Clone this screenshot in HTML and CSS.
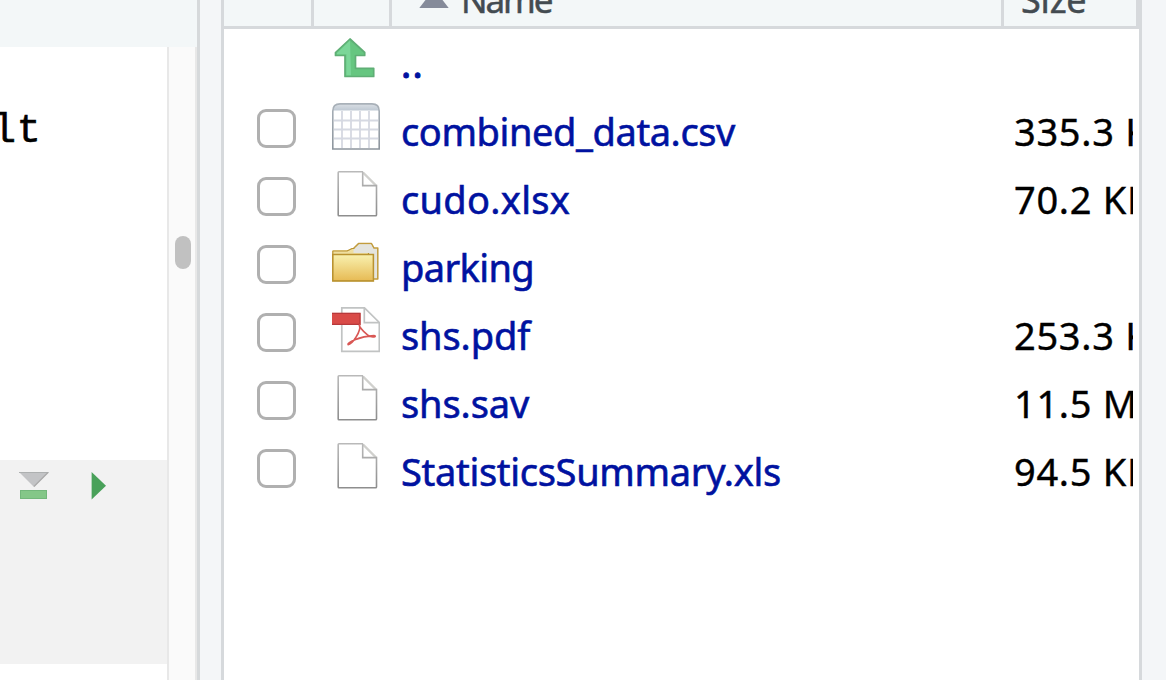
FILE: index.html
```
<!DOCTYPE html>
<html lang="en">
<head>
<meta charset="utf-8">
<title>Files</title>
<link rel="stylesheet" href="styles.css">
</head>
<body>
<svg class="defs" width="0" height="0" aria-hidden="true">
  <defs>
    <linearGradient id="paper" x1="0" y1="0" x2="0" y2="1"><stop offset="0" stop-color="#b9b9b9"/><stop offset="1" stop-color="#8e8e8e"/></linearGradient>
    <linearGradient id="folder" x1="0" y1="0" x2="0" y2="1"><stop offset="0" stop-color="#f8f0ae"/><stop offset="1" stop-color="#e7bb55"/></linearGradient>
    <linearGradient id="cap" x1="0" y1="0" x2="0" y2="1"><stop offset="0" stop-color="#d9dee4"/><stop offset="1" stop-color="#bfc9d3"/></linearGradient>
    <linearGradient id="frame" x1="0" y1="0" x2="0" y2="1"><stop offset="0" stop-color="#a9b1b9"/><stop offset="1" stop-color="#8d959d"/></linearGradient>
    <symbol id="file" viewBox="0 0 48 48"><path d="M6 1H30.5L44.5 15V44.5H6Z" fill="#fff"/><path d="M31 1.5L44 14.5" stroke="#d0d0cd" stroke-width="2.4"/><path d="M31 .8H7Q6.2 .8 6.2 1.6V44Q6.2 44.8 7 44.8H43.6Q44.5 44.8 44.5 44V14.6H30.7V.8" fill="none" stroke="url(#paper)" stroke-width="1.6"/></symbol>
  </defs>
</svg>
<div class="app">
  <section class="source">
    <div class="source-toolbar"></div>
    <div class="editor">
      <div class="document">
        <div class="code">lt</div>
        <div class="chunk">
          <svg width="30" height="30" viewBox="0 0 30 30"><path d="M0 1H30L15 16Z" fill="#c3c4c6"/><path d="M0 1.5H29.5" stroke="#adb0b0"/><path d="M29 1.5L15 15.5" stroke="#aaa" stroke-width="1.2"/><rect x="1.5" y="19.5" width="26" height="8" fill="#84c788" stroke="#73b77b"/></svg>
          <svg width="16" height="30" viewBox="0 0 16 30"><path d="M.6 1L15 14.7L.6 28.5Z" fill="#49a15a"/></svg>
        </div>
      </div>
      <div class="scrollbar"><div class="thumb"></div></div>
    </div>
  </section>
  <section class="files">
    <header class="columns">
      <div></div>
      <div></div>
      <div class="name-head"><svg width="30" height="20" viewBox="0 0 30 20"><path d="M15 1L29.7 20H.3Z" fill="#858b9a"/></svg><span>Name</span></div>
      <div class="size-head">Size</div>
    </header>
    <div class="row parent">
      <svg class="icon" width="48" height="48" viewBox="0 0 48 48"><path d="M18 4L3.5 17.5V20.5H13V41.5H41.7V33.3H23.5V20.5H32.7V17.5Z" fill="#66c680" stroke="#5fae75" stroke-width="1.7" stroke-linejoin="round"/><path d="M18 5.5L5 18V19.3H14.4V40.3H19Z" fill="#7bd698"/></svg>
      <a class="name">..</a>
    </div>
    <div class="row">
      <span class="check"></span>
      <svg class="icon" width="48" height="48" viewBox="0 0 48 48"><path d="M.8 46V8Q.8 .9 8 .9H40Q47.2 .9 47.2 8V46Z" fill="#fff"/><path d="M1 7.5Q1 1 8 1H40Q47 1 47 7.5Z" fill="url(#cap)"/><path d="M10 8V45M19 8V45M28 8V45M37 8V45M2 17.5H46M2 26.5H46M2 35.5H46" stroke="#d6d9e2" stroke-width="1.8"/><path d="M.8 46V8Q.8 .9 8 .9H40Q47.2 .9 47.2 8V46Z" fill="none" stroke="url(#frame)" stroke-width="1.6"/></svg>
      <a class="name csv">combined_data.csv</a><span class="size">335.3 KB</span>
    </div>
    <div class="row">
      <span class="check"></span><svg class="icon" width="48" height="48"><use href="#file"/></svg>
      <a class="name xlsx">cudo.xlsx</a><span class="size">70.2 KB</span>
    </div>
    <div class="row">
      <span class="check"></span>
      <svg class="icon" width="48" height="48" viewBox="0 0 48 48"><g transform="translate(0 3.6)"><path d="M20.5 11V7L26.5 1H39.5L42 5.5H45.8V36.3H30" fill="#e4e4de" stroke="#c29c3d" stroke-width="1.5" stroke-linejoin="round"/><path d="M.8 38V7.4H14.5L18 7.4L20.5 5.5H35.5V11" fill="#efdfa0" stroke="none"/><path d="M.8 38V8.4H15L20 5.9H36.5V12H41.4V38Z" fill="#efdfa0" stroke="#b99230" stroke-width="1.2" stroke-linejoin="round"/><path d="M21.5 10.5V7L27 1.8H39L41.3 6.3H45V35.5H42V10.5Z" fill="#e4e4de"/><path d="M1.3 12.5H40.8V38H1.3Z" fill="url(#folder)"/><path d="M.8 12H41.4V38.4H.8Z" fill="none" stroke="#b99230" stroke-width="1.5"/></g></svg>
      <a class="name dir">parking</a>
    </div>
    <div class="row">
      <span class="check"></span>
      <svg class="icon" width="48" height="48" viewBox="0 0 48 48"><g transform="translate(0 -.6)"><path d="M9.8 1.5H32.5L47.3 16V45H9.8Z" fill="#fff" stroke="#c1c3c3" stroke-width="1.7"/><path d="M32.3 1.5V16.3H47" fill="none" stroke="#c1c3c3" stroke-width="1.7"/><path d="M0 6.5H28.5V18.5H0Z" fill="#d94b48"/><path d="M0 7H28V18H0" fill="none" stroke="#b7393b" stroke-width="1.2"/><path d="M27.5 18.5C29.5 25 20 38 16.2 38.2C14.5 36.5 27 30 42 29.2C45.5 29.6 41 32.5 35.5 28.5C30 24 26.5 19 27.5 18.5Z" fill="none" stroke="#d95754" stroke-width="1.7"/></g></svg>
      <a class="name pdf">shs.pdf</a><span class="size">253.3 KB</span>
    </div>
    <div class="row">
      <span class="check"></span><svg class="icon" width="48" height="48"><use href="#file"/></svg>
      <a class="name sav">shs.sav</a><span class="size">11.5 MB</span>
    </div>
    <div class="row">
      <span class="check"></span><svg class="icon" width="48" height="48"><use href="#file"/></svg>
      <a class="name xls">StatisticsSummary.xls</a><span class="size">94.5 KB</span>
    </div>
  </section>
</div>
</body>
</html>
```
FILE: styles.css
```
* { box-sizing: border-box; }
body { margin: 0; overflow: hidden; background: #f4f6f8; font-family: "Noto Sans", sans-serif; font-size: 38px; color: #000; }
.defs { display: block; }
.app { display: grid; grid-template-columns: 200px 921px; gap: 21px; height: 680px; }
.source { border-right: 3px solid #d6d9db; display: flex; flex-direction: column; background: #fff; overflow: hidden; }
.source-toolbar { height: 47px; background: #f3f7f8; flex: none; }
.editor { flex: 1; display: grid; grid-template-columns: 167px 30px; }
.document { overflow: hidden; }
.code { height: 413px; padding-top: 63px; margin-left: -8px; font: 40px/44px "Liberation Mono", monospace; letter-spacing: .8px; -webkit-text-stroke: .6px #000; }
.chunk { height: 204px; background: #f2f2f2; display: flex; gap: 42px; padding: 11px 0 0 19px; }
.scrollbar { border: solid #e8e8e8; border-width: 0 2px; background: #fafafa; padding: 189px 0 0 6px; }
.thumb { width: 16px; height: 33px; border-radius: 8px; background: #c1c1c1; }
.files { border: solid #d6d9dc; border-width: 0 3px; background: #fff; overflow: hidden; }
.columns { display: grid; grid-template-columns: 90px 78px 612px 135px; height: 29px; background: #f3f7f8; border-bottom: 3px solid #d6d9dc; color: #434b51; font-size: 36px; -webkit-text-stroke: .5px #434b51; }
.columns > div { border-right: 3px solid #d6d9dc; height: 26px; }
.name-head { display: flex; gap: 12px; padding-left: 27px; }
.name-head svg { margin-top: -12px; flex: none; }
.name-head span { margin-top: -25px; line-height: 49px; font-size: 35px; letter-spacing: -2.1px; }
.columns > .size-head { padding-left: 17px; line-height: 0; letter-spacing: -.2px; }
.row { display: grid; grid-template-columns: 39px 84px 634px 119px; grid-template-areas: "check icon name size"; height: 68px; padding-left: 33px; }
.parent { height: 66px; }
.check { grid-area: check; width: 39px; height: 39px; margin-top: 14px; border: 3px solid #b0b0b0; border-radius: 9px; }
.icon { grid-area: icon; margin: 8px 0 0 36px; }
.name { grid-area: name; padding-left: 21px; line-height: 52px; margin-top: 10px; color: #0012a0; white-space: nowrap; -webkit-text-stroke: .6px #0012a0; }
.parent .name { margin-top: 8px; letter-spacing: 1.4px; -webkit-text-stroke-width: 1px; }
.parent .icon { margin-top: 6px; }
.size { grid-area: size; margin-top: 10px; width: 119px; line-height: 52px; letter-spacing: .7px; overflow: hidden; white-space: nowrap; -webkit-text-stroke: .4px #000; }
.csv { letter-spacing: -.4px; }
.xlsx { letter-spacing: .3px; }
.dir { letter-spacing: -.6px; }
.pdf, .sav { letter-spacing: -.1px; }
.xls { letter-spacing: -.3px; }
```
